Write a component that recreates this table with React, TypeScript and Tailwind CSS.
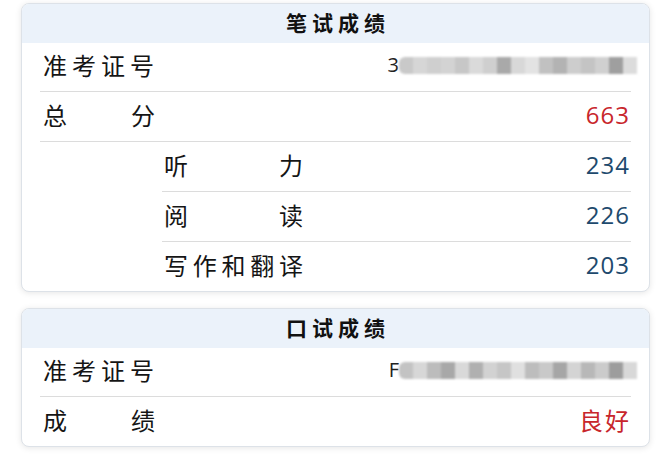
import React from 'react';

const cjk = { fontFamily: '"Noto Sans CJK SC", "Noto Sans", sans-serif' };

function Label({ text, width }: { text: string; width: string }) {
  return (
    <div className={`flex justify-between text-[24px] leading-none text-[#151515] ${width}`} style={cjk}>
      {text.split('').map((c, i) => (
        <span key={i}>{c}</span>
      ))}
    </div>
  );
}

function Masked({ lead, blocks }: { lead: string; blocks: string[] }) {
  return (
    <div className="flex items-center h-[20px] mr-[-8px]">
      <span className="text-[20px] leading-none text-[#222]" style={{ fontFamily: '"Open Sans", sans-serif' }}>
        {lead}
      </span>
      <div className="flex h-[17px] blur-[0.8px] rounded-l-[6px] overflow-hidden">
        {blocks.map((b, i) => (
          <div key={i} className={`w-[14px] h-full ${b}`} />
        ))}
      </div>
    </div>
  );
}

function Value({ children, red }: { children: React.ReactNode; red?: boolean }) {
  return (
    <span
      className={`text-[24px] leading-none tracking-[1px] mr-[-1px] ${red ? 'text-[#c8262c]' : 'text-[#1e4a6d]'}`}
      style={{ fontFamily: '"Open Sans", sans-serif' }}
    >
      {children}
    </span>
  );
}

function Card({ title, children }: { title: string; children: React.ReactNode }) {
  return (
    <div className="w-[629px] rounded-[8px] border border-[#dde2e8] bg-white shadow-[0_1px_6px_rgba(0,0,0,0.10)] overflow-hidden">
      <div className="h-[39px] pb-[2px] bg-[#ebf2fa] flex items-center justify-center">
        <span className="text-[21px] leading-none font-bold tracking-[5px] pl-[5px] text-[#111]" style={cjk}>
          {title}
        </span>
      </div>
      <div className="px-[18px]">{children}</div>
    </div>
  );
}

const blocks1 = [
  'bg-[#c9c9c9]', 'bg-[#d6d6d6]', 'bg-[#cfcfcf]', 'bg-[#d3d3d3]', 'bg-[#c7c7c7]', 'bg-[#dadada]',
  'bg-[#cfcfcf]', 'bg-[#a9a9a9]', 'bg-[#d8d8d8]', 'bg-[#e3e3e3]', 'bg-[#c1c1c1]', 'bg-[#b3b3b3]',
  'bg-[#cdcdcd]', 'bg-[#c4c4c4]', 'bg-[#d0d0d0]', 'bg-[#9f9f9f]', 'bg-[#dcdcdc]',
];

const blocks2 = [
  'bg-[#c3c3c3]', 'bg-[#d7d7d7]', 'bg-[#bcbcbc]', 'bg-[#a8a8a8]', 'bg-[#d9d9d9]', 'bg-[#b0b0b0]',
  'bg-[#d2d2d2]', 'bg-[#c6c6c6]', 'bg-[#e0e0e0]', 'bg-[#bdbdbd]', 'bg-[#c9c9c9]', 'bg-[#a6a6a6]',
  'bg-[#d4d4d4]', 'bg-[#b8b8b8]', 'bg-[#cbcbcb]', 'bg-[#9d9d9d]', 'bg-[#d8d8d8]',
];

const row = 'flex items-center justify-between pb-[4px] pr-[2px]';

export default function App() {
  return (
    <div className="min-h-screen bg-white pl-[21px] pt-[3px] flex flex-col gap-[16px]">
      <Card title="笔试成绩">
        <div className={`h-[49px] border-b border-[#dcdcdc] pl-[3px] ${row}`}>
          <Label text="准考证号" width="w-[111px]" />
          <Masked lead="3" blocks={blocks1} />
        </div>
        <div className={`h-[50px] border-b border-[#dcdcdc] pl-[3px] ${row}`}>
          <Label text="总分" width="w-[112px]" />
          <Value red>663</Value>
        </div>
        <div className="ml-[122px]">
          <div className={`h-[50px] border-b border-[#dcdcdc] pl-[2px] ${row}`}>
            <Label text="听力" width="w-[139px]" />
            <Value>234</Value>
          </div>
          <div className={`h-[50px] border-b border-[#dcdcdc] pl-[2px] ${row}`}>
            <Label text="阅读" width="w-[139px]" />
            <Value>226</Value>
          </div>
          <div className={`h-[49px] pl-[2px] ${row}`}>
            <Label text="写作和翻译" width="w-[139px]" />
            <Value>203</Value>
          </div>
        </div>
      </Card>
      <Card title="口试成绩">
        <div className={`h-[49px] border-b border-[#dcdcdc] pl-[3px] ${row}`}>
          <Label text="准考证号" width="w-[111px]" />
          <Masked lead="F" blocks={blocks2} />
        </div>
        <div className={`h-[49px] pl-[3px] ${row}`}>
          <Label text="成绩" width="w-[112px]" />
          <span className="text-[24px] leading-none tracking-[2px] mr-[-2px] text-[#c8262c]" style={cjk}>
            良好
          </span>
        </div>
      </Card>
    </div>
  );
}
